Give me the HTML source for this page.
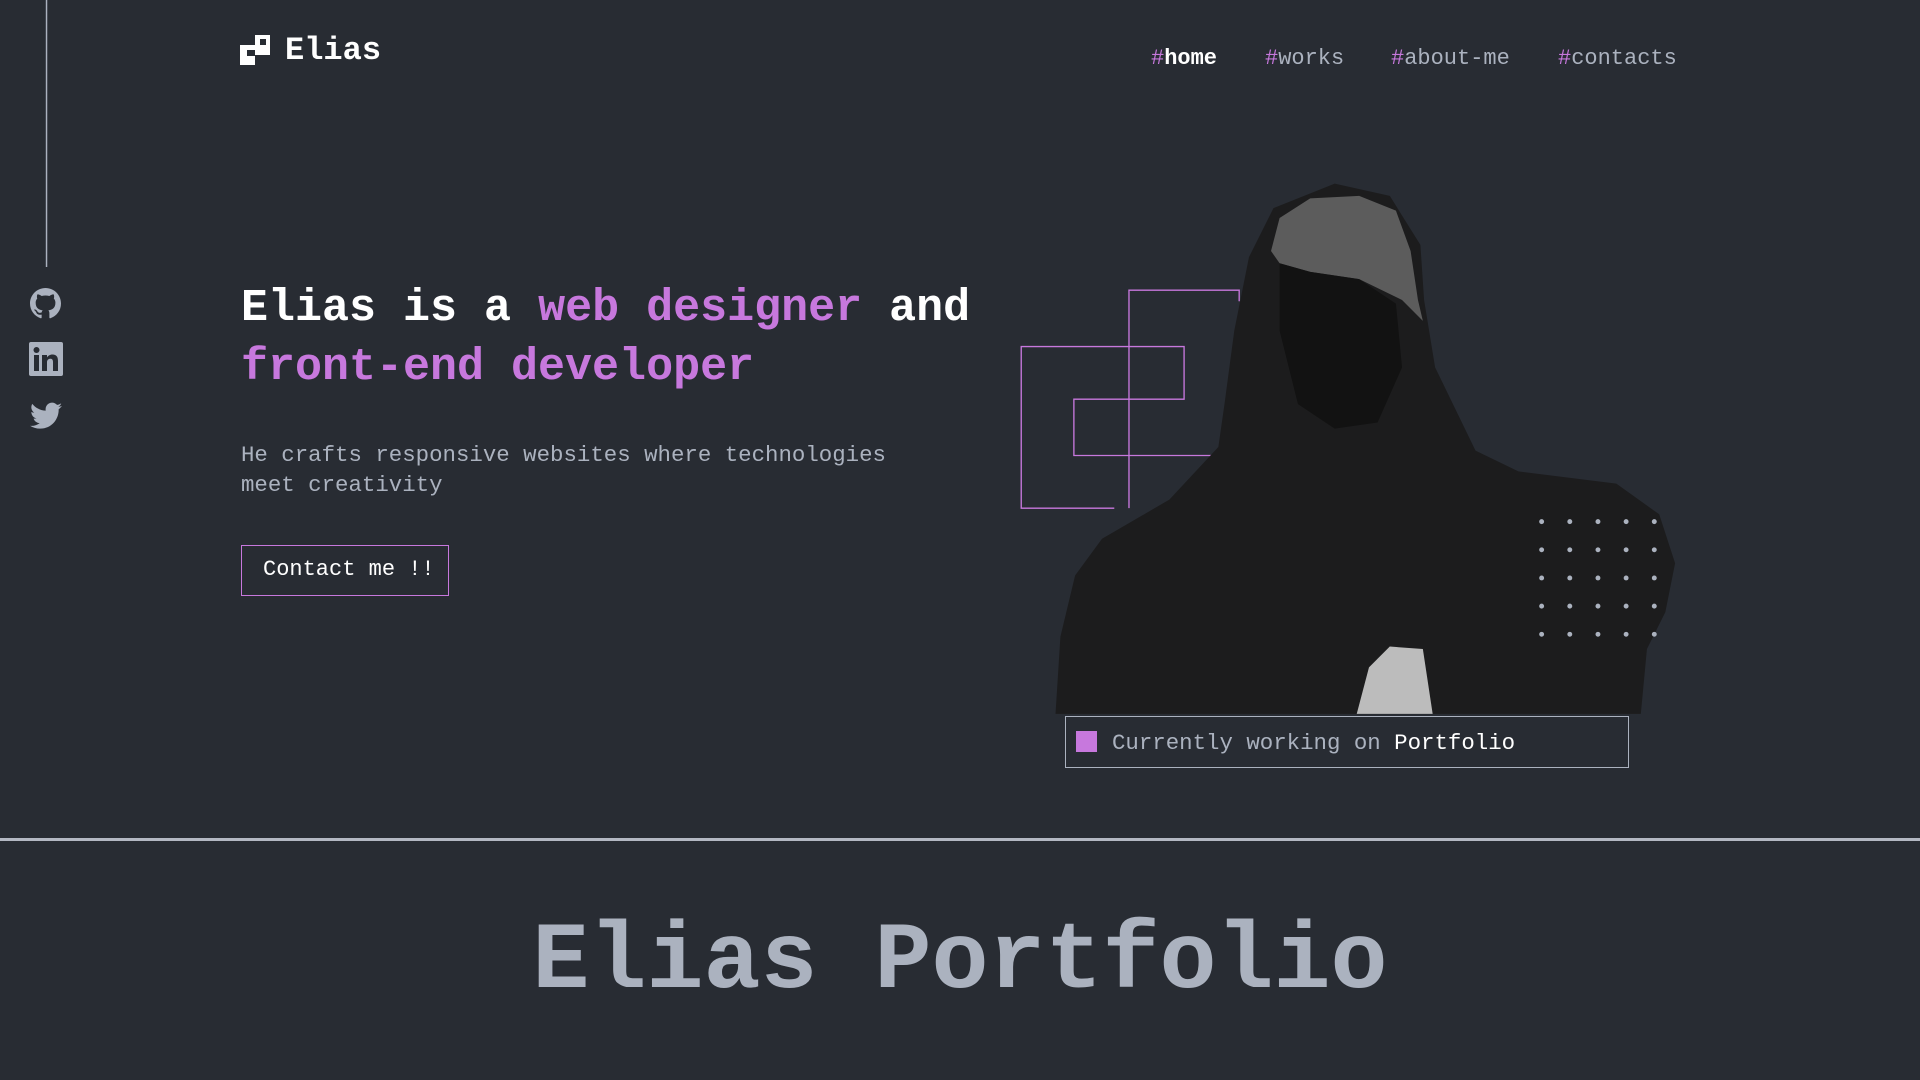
<!DOCTYPE html>
<html><head><meta charset="utf-8"><style>
*{margin:0;padding:0;box-sizing:border-box}
body{width:1920px;height:1080px;background:#282c33;overflow:hidden;position:relative;font-family:"Liberation Mono",monospace;color:#abb2bf}
.a{position:absolute;white-space:nowrap}
.p{color:#c778dd}
.nav{font-size:22px;top:45px;line-height:28px}
.nav .w{color:#fff;font-weight:bold}
</style></head><body>
<svg class="a" style="left:0;top:0" width="1920" height="1080" viewBox="0 0 1568 882">
 <line x1="38" y1="0" x2="38" y2="218" stroke="#abb2bf" stroke-width="1.2"/>
 <g fill="none" stroke="#c778dd" stroke-width="1.1">
  <polyline points="922,415 922,237 1012,237 1012,246"/>
  <polyline points="910,415 834,415 834,283 967,283 967,326 877,326 877,372 995,372"/>
 </g>
 <path d="M862,583 L866,520 878,470 900,440 955,408 995,365 1000,330 1008,270 1020,210 1040,170 1090,150 1135,160 1160,200 1163,245 1172,300 1205,368 1240,385 1320,395 1355,420 1368,460 1360,500 1345,530 1340,583 Z" fill="#1c1c1d"/>
 <path d="M1038,205 L1045,178 1070,162 1110,160 1140,172 1152,205 1158,245 1162,262 1145,245 1110,228 1070,222 1045,215 Z" fill="#5c5c5c"/>
 <path d="M1045,215 L1070,222 1110,228 1140,248 1145,300 1125,345 1090,350 1060,330 1045,270 Z" fill="#121212"/>
 <path d="M1108,583 L1118,545 1135,528 1162,530 1170,583 Z" fill="#bcbcbc"/>
 <g fill="#abb2bf">
  <circle cx="1259" cy="426" r="2"/><circle cx="1282" cy="426" r="2"/><circle cx="1305" cy="426" r="2"/><circle cx="1328" cy="426" r="2"/><circle cx="1351" cy="426" r="2"/>
  <circle cx="1259" cy="449" r="2"/><circle cx="1282" cy="449" r="2"/><circle cx="1305" cy="449" r="2"/><circle cx="1328" cy="449" r="2"/><circle cx="1351" cy="449" r="2"/>
  <circle cx="1259" cy="472" r="2"/><circle cx="1282" cy="472" r="2"/><circle cx="1305" cy="472" r="2"/><circle cx="1328" cy="472" r="2"/><circle cx="1351" cy="472" r="2"/>
  <circle cx="1259" cy="495" r="2"/><circle cx="1282" cy="495" r="2"/><circle cx="1305" cy="495" r="2"/><circle cx="1328" cy="495" r="2"/><circle cx="1351" cy="495" r="2"/>
  <circle cx="1259" cy="518" r="2"/><circle cx="1282" cy="518" r="2"/><circle cx="1305" cy="518" r="2"/><circle cx="1328" cy="518" r="2"/><circle cx="1351" cy="518" r="2"/>
 </g>
</svg>
<svg class="a" style="left:240px;top:35px" width="30" height="30" viewBox="0 0 30 30">
 <rect x="15" y="0" width="15" height="20" fill="#fff"/>
 <rect x="0" y="10" width="15" height="20" fill="#fff"/>
 <rect x="7" y="15" width="8" height="6" fill="#282c33"/>
 <rect x="20" y="4" width="6" height="6" fill="#282c33"/>
</svg>
<div class="a" style="left:285px;top:31px;font-size:32px;font-weight:bold;color:#fff;line-height:40px">Elias</div>
<div class="a nav" style="left:1151px"><span class="p">#</span><span class="w">home</span></div>
<div class="a nav" style="left:1265px"><span class="p">#</span>works</div>
<div class="a nav" style="left:1391px"><span class="p">#</span>about-me</div>
<div class="a nav" style="left:1558px"><span class="p">#</span>contacts</div>
<svg class="a" style="left:30px;top:288px" width="31" height="31" viewBox="0 0 16 16"><path fill="#abb2bf" d="M8 0C3.58 0 0 3.58 0 8c0 3.54 2.29 6.53 5.47 7.590.4.07.55-.17.55-.38 0-.19-.01-.82-.01-1.49-2.01.37-2.530-.49-2.69-.94-.09-.23-.48-.94-.82-1.13-.28-.15-.68-.52-.01-.53.63-.01 1.08.58 1.23.82.72 1.21 1.87.87 2.33.66.07-.52.28-.87.51-1.07-1.78-.2-3.64-.89-3.64-3.95 0-.87.31-1.59.82-2.15-.08-.2-.36-1.02.08-2.12 0 0 .67-.21 2.2.82.64-.18 1.32-.27 2-.27.68 0 1.36.09 2 .27 1.53-1.04 2.2-.82 2.2-.82.44 1.1.16 1.92.08 2.12.51.56.82 1.27.82 2.15 0 3.07-1.87 3.75-3.65 3.95.29.25.54.73.54 1.48 0 1.07-.01 1.93-.01 2.2 0 .21.15.46.55.38A8.013 8.013 0 0016 8c0-4.42-3.58-8-8-8z"/></svg>
<svg class="a" style="left:29px;top:342px" width="34" height="34" viewBox="0 0 34 34"><rect width="34" height="34" rx="2" fill="#abb2bf"/><rect x="5" y="13" width="5" height="16" fill="#282c33"/><circle cx="7.5" cy="8" r="3" fill="#282c33"/><path d="M13 13h5v2.5c1-1.8 3-3 5.5-3 4 0 5.5 2.5 5.5 6.5V29h-5v-9c0-2-.7-3.3-2.6-3.3S18 18 18 20v9h-5z" fill="#282c33"/></svg>
<svg class="a" style="left:30px;top:402px" width="32" height="28" viewBox="0 0 24 20"><path fill="#abb2bf" d="M24 2.4c-.9.4-1.8.6-2.8.8 1-.6 1.8-1.6 2.2-2.7-1 .6-2 1-3.1 1.2C19.3.7 18 0 16.6 0c-2.7 0-4.9 2.2-4.9 4.9 0 .4 0 .8.1 1.1C7.7 5.8 4.1 3.9 1.7.9c-.4.7-.7 1.6-.7 2.5 0 1.7.9 3.200 2.2 4.1-.8 0-1.6-.2-2.2-.6v.1c0 2.4 1.7 4.4 3.9 4.8-.4.1-.8.2-1.3.2-.3 0-.6 0-.9-.1.6 2 2.4 3.4 4.6 3.4-1.7 1.3-3.8 2.1-6.1 2.1-.4 0-.8 0-1.2-.1 2.2 1.4 4.8 2.2 7.5 2.2 9.1 0 14-7.5 14-14v-.6c1-.7 1.8-1.6 2.5-2.5z"/></svg>
<div class="a" style="left:241px;top:279px;font-size:45px;font-weight:bold;color:#fff;line-height:59px">Elias is a <span class="p">web designer</span> and<br><span class="p">front-end developer</span></div>
<div class="a" style="left:241px;top:441px;font-size:22.4px;line-height:29.5px">He crafts responsive websites where technologies<br>meet creativity</div>
<div class="a" style="left:241px;top:545px;width:208px;height:51px;border:1.5px solid #c778dd;color:#fff;font-size:22px;line-height:48px;padding-left:21px">Contact me !!</div>
<div class="a" style="left:1065px;top:716px;width:564px;height:52px;border:1.5px solid #abb2bf;background:#282c33"></div>
<div class="a" style="left:1076px;top:731px;width:21px;height:21px;background:#c778dd"></div>
<div class="a" style="left:1112px;top:729px;font-size:22.4px;line-height:28px">Currently working on <span style="color:#fff">Portfolio</span></div>
<div class="a" style="left:0;top:838px;width:1920px;height:3px;background:#b3b8c3"></div>
<div class="a" style="left:0;width:1920px;top:902px;text-align:center;font-size:95px;font-weight:bold;line-height:120px;color:#abb2bf">Elias Portfolio</div>
</body></html>
